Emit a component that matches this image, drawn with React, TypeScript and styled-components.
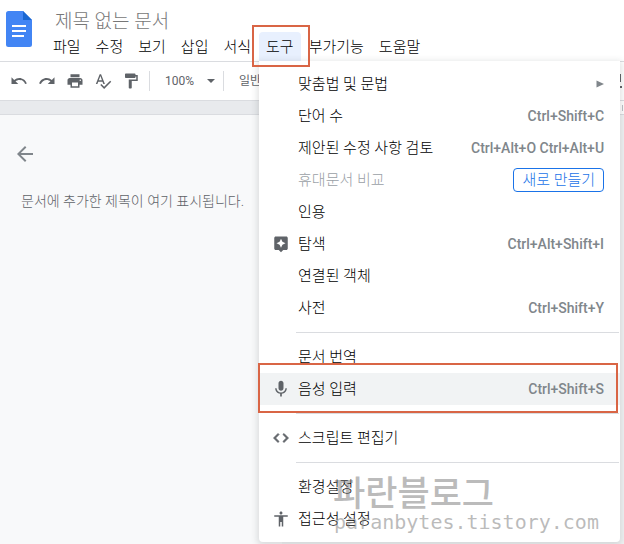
import React from 'react';
import styled, { createGlobalStyle, css } from 'styled-components';

const Global = createGlobalStyle`
  * { box-sizing: border-box; }
  html, body, #root { height: 100%; }
  body {
    margin: 0;
    overflow: hidden;
    background: #fff;
    color: #000;
    font: 15px/20px Roboto, "Noto Sans CJK KR", sans-serif;
  }
  button, input, select { font: inherit; color: inherit; }
`;

const mark = '#d96545';

const Page = styled.div`
  display: flex;
  flex-direction: column;
  min-height: 100%;
`;

const Header = styled.header`
  display: flex;
  height: 62px;
  padding-left: 6px;
  border-bottom: 1px solid #dadce0;
`;

const Logo = styled.svg`
  flex: none;
  width: 26px;
  height: 36px;
  margin-top: 11px;
`;

const HeaderBody = styled.div`
  flex: 1;
  display: flex;
  flex-direction: column;
  justify-content: space-between;
  padding: 6px 0 0 14px;
`;

const Title = styled.input`
  height: 26px;
  width: 160px;
  margin-left: 9px;
  padding: 0;
  border: 0;
  background: none;
  outline: 0;
  && { font-size: 19px; color: #777; font-weight: 300; }
`;

const MenuBar = styled.nav`
  display: flex;
  gap: 1px;
`;

const MenuSlot = styled.div`
  position: relative;
`;

const MenuButton = styled.button<{ $open?: boolean }>`
  height: 29px;
  padding: 1px 7px 0;
  border: 0;
  border-radius: 4px 4px 0 0;
  background: ${p => (p.$open ? '#e8f0fe' : 'transparent')};
  white-space: nowrap;
  && { font-weight: 300; }
`;

const Outline = styled.span<{ $row?: boolean }>`
  position: absolute;
  z-index: 3;
  border: 2px solid ${mark};
  pointer-events: none;
  ${p => (p.$row
    ? css`inset: -10px 2px -8px -1px;`
    : css`inset: -7px -9px -6px -7px;`)}
`;

const Dropdown = styled.div`
  position: absolute;
  z-index: 2;
  top: 100%;
  left: 0;
  width: 361px;
  padding: 7px 0;
  border-radius: 0 0 4px 4px;
  background: #fff;
  box-shadow: 0 2px 6px 2px rgba(60, 64, 67, 0.15);
`;

const Item = styled.div<{ $active?: boolean; $muted?: boolean }>`
  position: relative;
  display: grid;
  grid-template-columns: 39px 1fr auto;
  align-items: center;
  height: 32px;
  padding-right: 16px;
  background: ${p => (p.$active ? '#f1f3f4' : 'transparent')};
  color: ${p => (p.$muted ? '#9aa0a6' : '#000')};
  font-weight: 300;
  white-space: nowrap;
`;

const IconCell = styled.span`
  display: flex;
  justify-content: center;
  padding-left: 5px;
  color: #5f6368;
`;

const Shortcut = styled.span`
  color: #80868b;
  font-size: 14px;
  font-weight: 500;
`;

const Arrow = styled.svg`
  width: 8px;
  height: 8px;
`;

const NewButton = styled.button`
  height: 24px;
  padding: 0 8px;
  border: 1px solid #1a73e8;
  border-radius: 4px;
  background: #fff;
  && { color: #1a73e8; }
  line-height: 20px;
`;

const Separator = styled.hr`
  height: 1px;
  margin: 8px 1px 8px 37px;
  border: 0;
  background: #dadce0;
`;

const Watermark = styled.div`
  position: absolute;
  left: 74px;
  bottom: 7px;
  color: rgba(120, 120, 120, 0.5);
  pointer-events: none;
  white-space: nowrap;
`;

const WatermarkName = styled.div`
  font: 500 35px/36px "Noto Sans CJK KR", sans-serif;
`;

const WatermarkUrl = styled.div`
  padding-left: 1px;
  font: 20px/26px "DejaVu Sans Mono", monospace;
`;

const Toolbar = styled.div`
  display: flex;
  align-items: center;
  height: 39px;
  padding-left: 10px;
  border-bottom: 1px solid #dadce0;
  color: #5f6368;
`;

const Tool = styled.button`
  display: flex;
  justify-content: center;
  width: 28px;
  padding: 0;
  border: 0;
  background: none;
  && { color: #5f6368; }
  &:first-child { width: 18px; margin-right: 5px; }
`;

const EditMode = styled.button`
  display: flex;
  margin-left: auto;
  padding: 0;
  border: 0;
  background: none;
`;

const ToolGroup = styled.div`
  display: flex;
  margin-right: 4px;
`;

const Divider = styled.span`
  width: 1px;
  height: 20px;
  background: #dadce0;
`;

const Picker = styled.button`
  display: flex;
  align-items: center;
  justify-content: space-between;
  width: 73px;
  padding: 0 8px 0 15px;
  border: 0;
  background: none;
  white-space: nowrap;
  && { font-size: 12px; }
`;

const Ruler = styled.div`
  display: flex;
  justify-content: flex-end;
  height: 14px;
  border-bottom: 1px solid #dadce0;
  background: #e8eaed;
`;

const RulerScale = styled.div`
  display: flex;
  align-items: center;
  width: 50%;
  padding-right: 1px;
  justify-content: flex-end;
  background: #fff;
`;

const Tick = styled.span`
  width: 1px;
  height: 6px;
  background: #bdc1c6;
`;

const Workspace = styled.main`
  flex: 1;
  display: flex;
  background: #f1f3f4;
`;

const Outliner = styled.aside`
  flex: none;
  width: 282px;
  padding: 27px 13px;
  background: #f8f9fa;
`;

const Back = styled.button`
  display: flex;
  padding: 0;
  border: 0;
  background: none;
  && { color: #80868b; }
`;

const Hint = styled.p`
  margin: 25px 0 0 8px;
  color: #5f6368;
  font-size: 14px;
  font-weight: 300;
`;

const Glyph = ({ d, size = 18, bold }: { d: string; size?: number; bold?: boolean }) => (
  <svg width={size} height={size} viewBox="0 0 24 24" fill="currentColor" stroke={bold ? 'currentColor' : 'none'} aria-hidden="true"><path d={d} /></svg>
);

const icons = {
  undo: 'M12.5 8c-2.65 0-5.05.99-6.9 2.6L2 7v9h9l-3.62-3.62c1.39-1.16 3.16-1.88 5.12-1.88 3.54 0 6.55 2.31 7.6 5.5l2.37-.78C21.08 11.03 17.15 8 12.5 8z',
  redo: 'M18.4 10.6C16.55 8.99 14.15 8 11.5 8c-4.65 0-8.58 3.03-9.96 7.22L3.9 16c1.05-3.19 4.05-5.5 7.6-5.5 1.95 0 3.73.72 5.12 1.88L13 16h9V7l-3.6 3.6z',
  print: 'M19 8H5c-1.66 0-3 1.34-3 3v6h4v4h12v-4h4v-6c0-1.66-1.34-3-3-3zm-3 11H8v-5h8v5zm3-7c-.55 0-1-.45-1-1s.45-1 1-1 1 .45 1 1-.45 1-1 1zm-1-9H6v4h12V3z',
  spell: 'M12.45 16h2.09L9.43 3H7.57L2.46 16h2.09l1.12-3h5.64l1.14 3zm-6.02-5L8.5 5.48 10.57 11H6.43zm15.16.59l-8.09 8.09L9.83 16l-1.41 1.41 5.09 5.09L23 13l-1.41-1.41z',
  paint: 'M18 4V3c0-.55-.45-1-1-1H5c-.55 0-1 .45-1 1v4c0 .55.45 1 1 1h12c.55 0 1-.45 1-1V6h1v4H9v11c0 .55.45 1 1 1h2c.55 0 1-.45 1-1v-9h8V4h-3z',
  back: 'M20 11H7.83l5.59-5.59L12 4l-8 8 8 8 1.41-1.41L7.83 13H20v-2z',
  explore: 'M19 2H5c-1.1 0-2 .9-2 2v14c0 1.1.9 2 2 2h4l3 3 3-3h4c1.1 0 2-.9 2-2V4c0-1.1-.9-2-2-2zm-5.12 10.88L12 17l-1.88-4.12L6 11l4.12-1.88L12 5l1.88 4.12L18 11l-4.12 1.88z',
  mic: 'M12 14c1.66 0 2.99-1.34 2.99-3L15 5c0-1.66-1.34-3-3-3S9 3.34 9 5v6c0 1.66 1.34 3 3 3zm5.3-3c0 3-2.54 5.1-5.3 5.1S6.7 14 6.7 11H5c0 3.41 2.72 6.23 6 6.72V21h2v-3.28c3.28-.48 6-3.3 6-6.72h-1.7z',
  code: 'M9.4 16.6L4.8 12l4.6-4.6L8 6l-6 6 6 6 1.4-1.4zm5.2 0l4.6-4.6-4.6-4.6L16 6l6 6-6 6-1.4-1.4z',
  access: 'M12 2c1.1 0 2 .9 2 2s-.9 2-2 2-2-.9-2-2 .9-2 2-2zm9 7h-6v13h-2v-6h-2v6H9V9H3V7h18v2z',
};

type Entry = { label: string; keys?: string; icon?: keyof typeof icons; muted?: boolean; active?: boolean; extra?: 'sub' | 'new' };

const groups: Entry[][] = [
  [
    { label: '맞춤법 및 문법', extra: 'sub' },
    { label: '단어 수', keys: 'Ctrl+Shift+C' },
    { label: '제안된 수정 사항 검토', keys: 'Ctrl+Alt+O Ctrl+Alt+U' },
    { label: '휴대문서 비교', muted: true, extra: 'new' },
    { label: '인용' },
    { label: '탐색', keys: 'Ctrl+Alt+Shift+I', icon: 'explore' },
    { label: '연결된 객체' },
    { label: '사전', keys: 'Ctrl+Shift+Y' },
  ],
  [
    { label: '문서 번역' },
    { label: '음성 입력', keys: 'Ctrl+Shift+S', icon: 'mic', active: true },
  ],
  [{ label: '스크립트 편집기', icon: 'code' }],
  [{ label: '환경설정' }, { label: '접근성 설정', icon: 'access' }],
];

const ToolsMenu = () => (
  <Dropdown role="menu" aria-label="도구">
    {groups.map((group, g) => (
      <React.Fragment key={g}>
        {g > 0 && <Separator />}
        {group.map(e => (
          <Item key={e.label} role="menuitem" tabIndex={-1} $active={e.active} $muted={e.muted}>
            <IconCell>
              {e.icon && <Glyph d={icons[e.icon]} size={e.icon === 'mic' ? 20 : 18} bold={e.icon === 'code'} />}
            </IconCell>
            <span>{e.label}</span>
            {e.keys && <Shortcut>{e.keys}</Shortcut>}
            {e.extra === 'sub' && <Arrow viewBox="0 0 8 8" fill="#80868b"><path d="M0.5 0.5 8 4 0.5 7.5z" /></Arrow>}
            {e.extra === 'new' && <NewButton>새로 만들기</NewButton>}
            {e.active && <Outline $row />}
          </Item>
        ))}
      </React.Fragment>
    ))}
    <Watermark>
      <WatermarkName>파란블로그</WatermarkName>
      <WatermarkUrl>paranbytes.tistory.com</WatermarkUrl>
    </Watermark>
  </Dropdown>
);

const menus = ['파일', '수정', '보기', '삽입', '서식', '도구', '부가기능', '도움말'];

const Caret = () => <svg width="8" height="4" viewBox="0 0 8 4" fill="#5f6368" aria-hidden="true"><path d="M0 0h8L4 4z" /></svg>;

export default function App() {
  return (
    <Page>
      <Global />
      <Header>
        <Logo viewBox="0 0 26 36" aria-label="Docs">
          <path d="M2.5 0H17l9 9v24.5a2.5 2.5 0 0 1-2.5 2.5h-21A2.5 2.5 0 0 1 0 33.5v-31A2.5 2.5 0 0 1 2.5 0z" fill="#4285f4" />
          <path d="M17 0l9 9h-9z" fill="#1967d2" />
          <path d="M6 14h14v2H6zm0 5h14v2H6zm0 5h12v2H6z" fill="#fff" />
        </Logo>
        <HeaderBody>
          <Title aria-label="문서 제목" defaultValue="제목 없는 문서" />
          <MenuBar>
            {menus.map(m => (
              <MenuSlot key={m}>
                <MenuButton $open={m === '도구'}>{m}</MenuButton>
                {m === '도구' && <><ToolsMenu /><Outline /></>}
              </MenuSlot>
            ))}
          </MenuBar>
        </HeaderBody>
      </Header>
      <Toolbar role="toolbar">
        <ToolGroup>
          <Tool aria-label="실행취소"><Glyph d={icons.undo} /></Tool>
          <Tool aria-label="재실행"><Glyph d={icons.redo} /></Tool>
          <Tool aria-label="인쇄"><Glyph d={icons.print} /></Tool>
          <Tool aria-label="맞춤법"><Glyph d={icons.spell} /></Tool>
          <Tool aria-label="서식 복사"><Glyph d={icons.paint} /></Tool>
        </ToolGroup>
        <Divider />
        <Picker>100%<Caret /></Picker>
        <Divider />
        <Picker>일반 텍스트</Picker>
        <EditMode aria-label="수정 모드">
          <svg width="4" height="16" viewBox="0 0 4 16" fill="#5f6368" aria-hidden="true"><path d="M0 1h1v8H0zM0 13h2v2H0z" /></svg>
        </EditMode>
      </Toolbar>
      <Ruler>
        <RulerScale><Tick /></RulerScale>
      </Ruler>
      <Workspace>
        <Outliner>
          <Back aria-label="닫기"><Glyph d={icons.back} size={24} /></Back>
          <Hint>문서에 추가한 제목이 여기 표시됩니다.</Hint>
        </Outliner>
      </Workspace>
    </Page>
  );
}
